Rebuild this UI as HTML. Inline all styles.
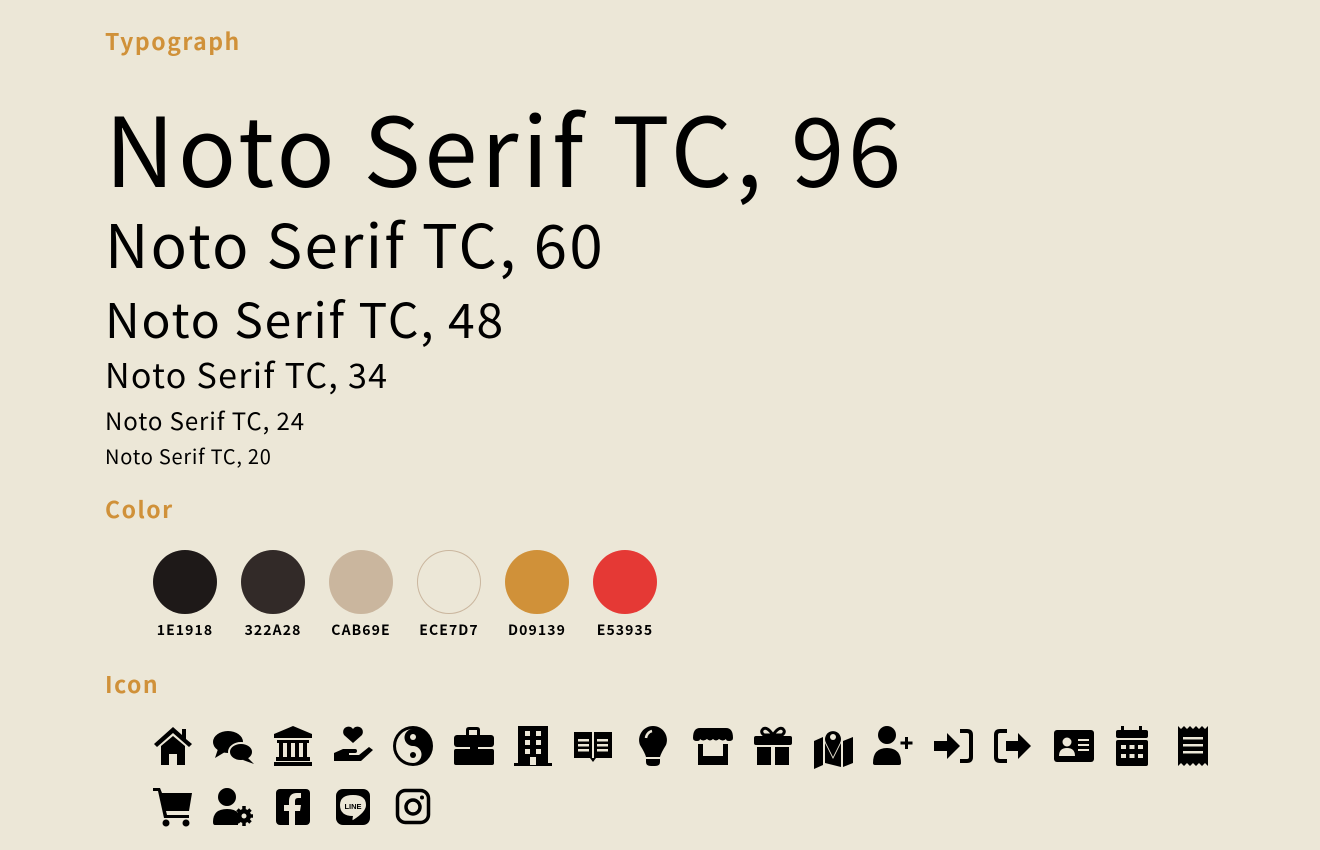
<!DOCTYPE html>
<html><head><meta charset="utf-8"><style>
body{margin:0;width:1320px;height:850px;background:#ECE7D7;position:relative;overflow:hidden;font-family:"Noto Sans CJK TC","DejaVu Sans",sans-serif;color:#000}
.t{position:absolute;left:105px;line-height:1;white-space:nowrap;letter-spacing:0.038em}
.h{font-weight:700;color:#D09139;font-size:23px;letter-spacing:1.5px}
.c{position:absolute;top:550px;width:64px;height:64px;border-radius:50%}
.l{position:absolute;top:623px;width:90px;text-align:center;font-weight:700;font-size:14px;line-height:1;letter-spacing:1.1px}
</style></head><body>
<div class="t h" style="top:29px">Typograph</div>
<div class="t" style="top:98px;font-size:96px">Noto Serif TC, 96</div>
<div class="t" style="top:213px;font-size:60px">Noto Serif TC, 60</div>
<div class="t" style="top:293px;font-size:48px">Noto Serif TC, 48</div>
<div class="t" style="top:357px;font-size:34px">Noto Serif TC, 34</div>
<div class="t" style="top:408px;font-size:24px">Noto Serif TC, 24</div>
<div class="t" style="top:446px;font-size:20px">Noto Serif TC, 20</div>
<div class="t h" style="top:497px">Color</div>
<div class="c" style="left:153px;background:#1E1918"></div>
<div class="c" style="left:241px;background:#322A28"></div>
<div class="c" style="left:329px;background:#CAB69E"></div>
<div class="c" style="left:417px;background:#ECE7D7;box-shadow:inset 0 0 0 1px #CAB69E"></div>
<div class="c" style="left:505px;background:#D09139"></div>
<div class="c" style="left:593px;background:#E53935"></div>
<div class="l" style="left:140px">1E1918</div>
<div class="l" style="left:228px">322A28</div>
<div class="l" style="left:316px">CAB69E</div>
<div class="l" style="left:404px">ECE7D7</div>
<div class="l" style="left:492px">D09139</div>
<div class="l" style="left:580px">E53935</div>
<div class="t h" style="top:672px">Icon</div>

<svg width="1320" height="850" style="position:absolute;left:0;top:0" fill="#000">
<g transform="translate(153,725)"><path d="M20 2 L1 19 L4 22 L20 8 L36 22 L39 19 L33 14 L33 4 L29 4 L29 10Z"/><path d="M8 21 L20 11 L32 21 L32 40 L24 40 L24 29 L16 29 L16 40 L8 40Z"/></g>
<g transform="translate(213,725)"><ellipse cx="15" cy="17" rx="15" ry="11"/><path d="M5 24 L2 33 L12 27Z"/><ellipse cx="28" cy="27" rx="12" ry="9" stroke="#ECE7D7" stroke-width="2"/><path d="M34 32 L41 39 L30 35Z"/></g>
<g transform="translate(273,725)"><path d="M20 1 L39 9 L39 13 L1 13 L1 9Z"/><rect x="4" y="15" width="32" height="3"/><rect x="6" y="18" width="4" height="14"/><rect x="14" y="18" width="4" height="14"/><rect x="22" y="18" width="4" height="14"/><rect x="30" y="18" width="4" height="14"/><rect x="3" y="32" width="34" height="4"/><rect x="1" y="37" width="38" height="4"/></g>
<g transform="translate(333,725)"><path d="M20 18 L11 10 A5 5 0 0 1 20 4 A5 5 0 0 1 29 10Z"/><path d="M1 28 L10 24 L22 24 A2 2 0 0 1 22 28 L16 28 L16 30 L26 30 L36 22 L40 25 L28 36 L1 36Z"/></g>
<g transform="translate(393,725)"><circle cx="20" cy="21" r="20"/><path d="M20 4 A8.5 8.5 0 0 0 20 21 A8.5 8.5 0 0 1 20 38 A17 17 0 0 1 20 4Z" fill="#ECE7D7"/><circle cx="20" cy="12" r="3" fill="#ECE7D7"/><circle cx="20" cy="30" r="3"/></g>
<g transform="translate(453,725)"><path d="M13 10 L13 5 Q13 2 16 2 L24 2 Q27 2 27 5 L27 10 L24 10 L24 5 L16 5 L16 10Z"/><rect x="1" y="10" width="40" height="12" rx="3"/><rect x="1" y="24" width="40" height="16" rx="2"/><rect x="17" y="20" width="8" height="6"/></g>
<g transform="translate(513,725)"><path d="M5 1 L35 1 L35 38 L39 38 L39 41 L1 41 L1 38 L5 38Z"/><g fill="#ECE7D7"><rect x="12" y="6" width="5" height="5"/><rect x="23" y="6" width="5" height="5"/><rect x="12" y="15" width="5" height="5"/><rect x="23" y="15" width="5" height="5"/><rect x="12" y="24" width="5" height="5"/><rect x="23" y="24" width="5" height="5"/><rect x="17" y="32" width="6" height="8"/></g></g>
<g transform="translate(573,727)"><path d="M1 5 L19 5 L19 31 L1 31Z M21 5 L39 5 L39 31 L21 31Z M17 31 L23 31 L20 35Z"/><g fill="#ECE7D7"><rect x="5" y="12" width="11" height="2.5"/><rect x="5" y="17" width="11" height="2.5"/><rect x="5" y="22" width="11" height="2.5"/><rect x="24" y="12" width="11" height="2.5"/><rect x="24" y="17" width="11" height="2.5"/><rect x="24" y="22" width="11" height="2.5"/></g></g>
<g transform="translate(633,725)"><path d="M20 1 A14 14 0 0 1 33 20 Q28 28 27 32 L13 32 Q12 28 7 20 A14 14 0 0 1 20 1Z"/><path d="M13 34 L27 34 L27 37 Q27 41 22 41 L18 41 Q13 41 13 37Z"/><path d="M13 13 A8 8 0 0 1 19 6" stroke="#ECE7D7" stroke-width="2.5" fill="none"/></g>
<g transform="translate(693,725)"><path d="M7 3 L33 3 Q40 3 40 13 Q40 16 36 16 Q33 16 33 14 Q30 17 26 14 Q23 17 20 14 Q17 17 14 14 Q10 17 7 14 Q7 16 4 16 Q0 16 0 13 Q0 3 7 3Z"/><path d="M5 19 L10 19 L10 31 L30 31 L30 19 L35 19 L35 40 L5 40Z"/></g>
<g transform="translate(753,725)"><path d="M20 10 Q14 1 10 4 Q7 7 11 10Z M20 10 Q26 1 30 4 Q33 7 29 10Z" fill="none" stroke="#000" stroke-width="3"/><rect x="1" y="11" width="38" height="9" rx="2"/><rect x="4" y="22" width="14" height="18"/><rect x="22" y="22" width="14" height="18"/></g>
<g transform="translate(813,725)"><path d="M1 16 L10 12 L10 40 L1 44Z M30 16 L40 12 L40 38 L30 42Z M12 18 L20 34 L28 18 L28 42 L12 38Z"/><path d="M20 32 L13 18 A8 8 0 1 1 27 18Z"/><circle cx="20" cy="12" r="3" fill="#ECE7D7"/></g>
<g transform="translate(873,725)"><circle cx="14" cy="10" r="9"/><path d="M0 38 Q0 23 14 23 Q28 23 28 38 Q28 40 26 40 L2 40 Q0 40 0 38Z"/><rect x="32" y="12" width="3" height="12"/><rect x="27.5" y="16.5" width="12" height="3"/></g>
<g transform="translate(933,725)"><path d="M1 16 L14 16 L14 8 L27 21 L14 34 L14 26 L1 26Z"/><path d="M27 6 L34 6 Q38 6 38 10 L38 32 Q38 36 34 36 L27 36" fill="none" stroke="#000" stroke-width="4"/></g>
<g transform="translate(993,725)"><path d="M14 6 L7 6 Q3 6 3 10 L3 32 Q3 36 7 36 L14 36" fill="none" stroke="#000" stroke-width="4"/><path d="M13 16 L25 16 L25 8 L38 21 L25 34 L25 26 L13 26Z"/></g>
<g transform="translate(1053,725)"><rect x="1" y="5" width="40" height="32" rx="3"/><circle cx="14" cy="17" r="4.5" fill="#ECE7D7"/><path d="M6 31 Q6 23 14 23 Q22 23 22 31Z" fill="#ECE7D7"/><g fill="#ECE7D7"><rect x="25" y="14" width="11" height="2"/><rect x="25" y="19" width="11" height="2"/><rect x="25" y="24" width="11" height="2"/></g></g>
<g transform="translate(1113,725)"><rect x="8" y="1" width="3" height="7"/><rect x="26" y="1" width="3" height="7"/><rect x="3" y="5" width="32" height="8" rx="2"/><rect x="3" y="15" width="32" height="26" rx="2"/><g fill="#ECE7D7"><rect x="8" y="20" width="5" height="4"/><rect x="16.5" y="20" width="5" height="4"/><rect x="25" y="20" width="5" height="4"/><rect x="8" y="29" width="5" height="4"/><rect x="16.5" y="29" width="5" height="4"/><rect x="25" y="29" width="5" height="4"/></g></g>
<g transform="translate(1173,725)"><path d="M5 1 L8 4 L11 1 L14 4 L17 1 L20 4 L23 1 L26 4 L29 1 L32 4 L35 1 L35 41 L32 38 L29 41 L26 38 L23 41 L20 38 L17 41 L14 38 L11 41 L8 38 L5 41Z"/><g fill="#ECE7D7"><rect x="10" y="12" width="20" height="2.5"/><rect x="10" y="19" width="20" height="2.5"/><rect x="10" y="26" width="20" height="2.5"/></g></g>
<g transform="translate(153,787)"><path d="M0 1 L7 1 L9 6 L39 6 L36 24 L13 24 L14 28 L36 28 L36 31 L11 31 L5 4 L0 4Z"/><circle cx="13" cy="36" r="3.5"/><circle cx="33" cy="36" r="3.5"/></g>
<g transform="translate(213,787)"><circle cx="14" cy="10" r="9"/><path d="M0 35 Q0 22 14 22 Q22 22 25 26 L25 38 L2 38 Q0 38 0 35Z"/><circle cx="31" cy="29" r="7"/><g stroke="#000" stroke-width="3.5"><path d="M31 19 L31 39 M22 29 L40 29 M24.5 22.5 L37.5 35.5 M37.5 22.5 L24.5 35.5"/></g><circle cx="31" cy="29" r="2.5" fill="#ECE7D7"/></g>
<g transform="translate(273,787)"><rect x="3" y="2" width="34" height="36" rx="4"/><path d="M22 38 L22 24 L27 24 L28 18 L22 18 L22 14 Q22 11 25 11 L28 11 L28 6 L24 6 Q16 6 16 14 L16 18 L11 18 L11 24 L16 24 L16 38Z" fill="#ECE7D7"/></g>
<g transform="translate(333,787)"><rect x="3" y="2" width="34" height="36" rx="7"/><path d="M20 8 Q33 8 33 18 Q33 25 20 33 Q19 34 20 29 Q7 29 7 18 Q7 8 20 8Z" fill="#ECE7D7"/><text x="20" y="22" font-family="Liberation Sans,sans-serif" font-weight="700" font-size="7.5" text-anchor="middle">LINE</text></g>
<g transform="translate(393,787)"><rect x="4.5" y="3.5" width="31" height="32" rx="8" fill="none" stroke="#000" stroke-width="3.5"/><circle cx="20" cy="20" r="7" fill="none" stroke="#000" stroke-width="3.5"/><circle cx="29" cy="10.5" r="2"/></g>
</svg>
</body></html>
